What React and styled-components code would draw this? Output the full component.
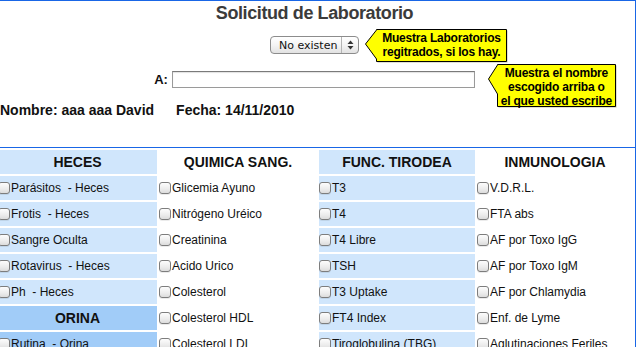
import React from "react";
import styled, { createGlobalStyle } from "styled-components";

const GlobalStyle = createGlobalStyle`
  html, body {
    margin: 0;
    padding: 0;
    background: #fff;
    overflow: hidden;
  }
  body {
    font-family: "Liberation Sans", Arial, sans-serif;
  }
`;

const columns = [
  {
    tone: "blue",
    items: [
      { label: "HECES", head: true },
      { label: "Parásitos\u00a0 - Heces" },
      { label: "Frotis\u00a0 - Heces" },
      { label: "Sangre Oculta" },
      { label: "Rotavirus\u00a0 - Heces" },
      { label: "Ph\u00a0 - Heces" },
      { label: "ORINA", head: true, dark: true },
      { label: "Rutina\u00a0 - Orina", dark: true },
    ],
  },
  {
    tone: "white",
    items: [
      { label: "QUIMICA SANG.", head: true },
      { label: "Glicemia Ayuno" },
      { label: "Nitrógeno Uréico" },
      { label: "Creatinina" },
      { label: "Acido Urico" },
      { label: "Colesterol" },
      { label: "Colesterol HDL" },
      { label: "Colesterol LDL" },
    ],
  },
  {
    tone: "blue",
    items: [
      { label: "FUNC. TIRODEA", head: true },
      { label: "T3" },
      { label: "T4" },
      { label: "T4 Libre" },
      { label: "TSH" },
      { label: "T3 Uptake" },
      { label: "FT4 Index" },
      { label: "Tiroglobulina (TBG)" },
    ],
  },
  {
    tone: "white",
    items: [
      { label: "INMUNOLOGIA", head: true },
      { label: "V.D.R.L." },
      { label: "FTA abs" },
      { label: "AF por Toxo IgG" },
      { label: "AF por Toxo IgM" },
      { label: "AF por Chlamydia" },
      { label: "Enf. de Lyme" },
      { label: "Aglutinaciones Feriles" },
    ],
  },
];

const Callout = ({ width, height, tipY, tipDepth, children }) => (
  <Bubble style={{ width: width + tipDepth + 2, height: height + 2 }}>
    <svg width={width + tipDepth + 2} height={height + 2}>
      <polygon
        points={`${tipDepth + 0.5},0.5 ${tipDepth + width - 0.5},0.5 ${tipDepth + width - 0.5},${height - 0.5} ${tipDepth + 0.5},${height - 0.5} ${tipDepth + 0.5},${tipY * 2} 0.5,${tipY} ${tipDepth + 0.5},1`}
        fill="#4a4a00"
        transform="translate(1,1)"
        opacity="0.35"
      />
      <polygon
        points={`${tipDepth + 0.5},0.5 ${tipDepth + width - 0.5},0.5 ${tipDepth + width - 0.5},${height - 0.5} ${tipDepth + 0.5},${height - 0.5} ${tipDepth + 0.5},${tipY * 2} 0.5,${tipY} ${tipDepth + 0.5},1`}
        fill="#ffff00"
        stroke="#000"
        strokeWidth="1"
      />
    </svg>
    <BubbleText style={{ left: tipDepth, width }}>{children}</BubbleText>
  </Bubble>
);

const App = () => {
  return (
    <>
      <GlobalStyle />
      <Page>
        <Header>
          <Title>Solicitud de Laboratorio</Title>
          <SelectRow>
            <Anchor>
              <SelectBox>
                <SelectText>No existen</SelectText>
                <SelectArrows>
                  <svg width="7" height="10" viewBox="0 0 7 10">
                    <path d="M3.5 0.5 L6.5 4 L0.5 4 Z" fill="#333" />
                    <path d="M3.5 9.5 L6.5 6 L0.5 6 Z" fill="#333" />
                  </svg>
                </SelectArrows>
              </SelectBox>
              <TipOne>
                <Callout width={131} height={33} tipY={15} tipDepth={11}>
                  Muestra Laboratorios
                  <br />
                  regitrados, si los hay.
                </Callout>
              </TipOne>
            </Anchor>
          </SelectRow>
          <InputRow>
            <Label>A:</Label>
            <Anchor>
              <TextInput type="text" />
              <TipTwo>
                <Callout width={119} height={43} tipY={15} tipDepth={9}>
                  Muestra el nombre
                  <br />
                  escogido arriba o
                  <br />
                  el que usted escribe
                </Callout>
              </TipTwo>
            </Anchor>
          </InputRow>
          <PatientRow>
            <span>Nombre: aaa aaa David</span>
            <span>Fecha: 14/11/2010</span>
          </PatientRow>
        </Header>
        <Exams>
          {columns.map((col, ci) => (
            <Column key={ci}>
              {col.items.map((item, ri) => (
                <Cell
                  key={ri}
                  $tone={item.dark ? "dark" : col.tone}
                  $head={item.head && !(item.dark && !item.head)}
                >
                  {item.head ? (
                    item.label
                  ) : (
                    <>
                      <Check type="checkbox" />
                      <span>{item.label}</span>
                    </>
                  )}
                </Cell>
              ))}
            </Column>
          ))}
        </Exams>
      </Page>
    </>
  );
};

const Page = styled.div`
  margin-left: -2px;
  width: 637px;
  border-top: 1px solid #1966e6;
  border-right: 1px solid #1966e6;
  min-height: 400px;
`;

const Header = styled.div`
  height: 146px;
  display: flex;
  flex-direction: column;
`;

const Title = styled.h1`
  margin: 0;
  padding-top: 2px;
  height: 20px;
  font-size: 18px;
  line-height: 20px;
  font-weight: bold;
  letter-spacing: -0.4px;
  color: #3b3b3b;
  text-align: center;
  padding-right: 4px;
`;

const SelectRow = styled.div`
  margin-top: 13px;
  display: flex;
  justify-content: center;
  padding-right: 4px;
`;

const Anchor = styled.div`
  position: relative;
  display: flex;
`;

const SelectBox = styled.div`
  width: 87px;
  height: 16px;
  border: 1px solid #8c8c8c;
  border-radius: 4px;
  background: linear-gradient(#ffffff, #f4f4f4 50%, #e2e2e2);
  display: flex;
  align-items: center;
  font-family: "DejaVu Sans", Verdana, sans-serif;
  font-size: 11px;
  color: #111;
`;

const SelectText = styled.span`
  flex: 1;
  padding-left: 8px;
`;

const SelectArrows = styled.span`
  width: 16px;
  height: 100%;
  border-left: 1px solid #b4b4b4;
  display: flex;
  align-items: center;
  justify-content: center;
`;

const Bubble = styled.div`
  position: relative;
`;

const BubbleText = styled.div`
  position: absolute;
  top: 1px;
  font-family: "Liberation Sans", Arial, sans-serif;
  font-weight: bold;
  font-size: 12px;
  line-height: 14px;
  letter-spacing: -0.2px;
  color: #000;
  text-align: center;
  padding-top: 1px;
`;

const TipOne = styled.div`
  position: absolute;
  left: calc(100% + 6px);
  top: -7px;
`;

const TipTwo = styled.div`
  position: absolute;
  left: calc(100% + 13px);
  top: -7px;
`;

const InputRow = styled.div`
  margin-top: 17px;
  display: flex;
  justify-content: center;
  align-items: center;
  gap: 4px;
  padding-right: 4px;
`;

const Label = styled.span`
  font-size: 13px;
  font-weight: bold;
  color: #111;
`;

const TextInput = styled.input`
  box-sizing: border-box;
  width: 303px;
  height: 17px;
  margin: 0;
  padding: 1px 3px;
  border: 1px solid #9a9a9a;
  border-top-color: #7a7a7a;
  box-shadow: inset 0 1px 1px rgba(0, 0, 0, 0.12);
  font-size: 12px;
  outline: none;
`;

const PatientRow = styled.div`
  margin-top: 14px;
  padding-left: 2px;
  display: flex;
  gap: 22px;
  font-size: 14px;
  line-height: 17px;
  font-weight: bold;
  color: #111;
  white-space: pre;
`;

const Exams = styled.div`
  border-top: 1px solid #1966e6;
  padding-top: 2px;
  display: grid;
  grid-template-columns: 159px 158px 156px 156px;
  column-gap: 2px;
`;

const Column = styled.div`
  display: flex;
  flex-direction: column;
  gap: 2px;
`;

const Cell = styled.div`
  height: 24px;
  display: flex;
  align-items: center;
  justify-content: ${(p) => (p.$head ? "center" : "flex-start")};
  background: ${(p) =>
    p.$tone === "dark" ? "#a1ccf8" : p.$tone === "blue" ? "#d0e6fc" : "#ffffff"};
  font-size: ${(p) => (p.$head ? "14px" : "12px")};
  font-weight: ${(p) => (p.$head ? "bold" : "normal")};
  color: #111;
  white-space: pre;
`;

const Check = styled.input`
  appearance: none;
  -webkit-appearance: none;
  box-sizing: border-box;
  width: 12px;
  height: 12px;
  margin: 0 1px 0 0;
  border: 1px solid #7d7d7d;
  border-radius: 3px;
  background: linear-gradient(#fdfdfd, #ececec 60%, #dcdcdc);
  box-shadow: 0 1px 0 rgba(0, 0, 0, 0.08);
`;

export default App;
